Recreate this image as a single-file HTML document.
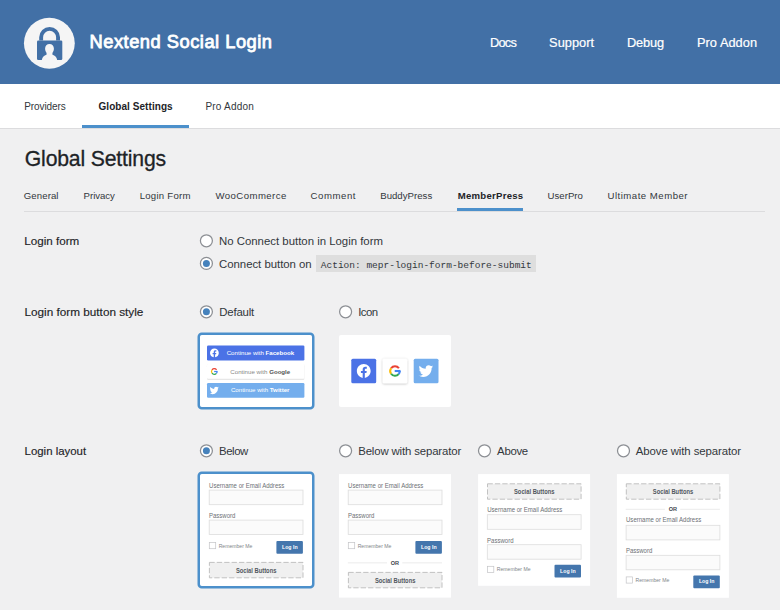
<!DOCTYPE html>
<html><head><meta charset="utf-8"><title>Nextend Social Login - Global Settings</title>
<style>html,body{margin:0;padding:0;width:780px;height:610px;overflow:hidden;background:#f0f0f1;font-family:"Liberation Sans",sans-serif}
svg{display:block}</style></head>
<body><svg width="780" height="610" viewBox="0 0 780 610"><defs><filter id="sh" x="-10%" y="-30%" width="120%" height="160%"><feDropShadow dx="0" dy="0.5" stdDeviation="0.6" flood-color="#000" flood-opacity="0.25"/></filter><filter id="sh2" x="-20%" y="-20%" width="140%" height="140%"><feDropShadow dx="0" dy="0.6" stdDeviation="1.1" flood-color="#000" flood-opacity="0.3"/></filter></defs>
<rect x="0" y="0" width="780" height="610" fill="#f0f0f1" />
<rect x="0" y="0" width="780" height="84" fill="#4270a6" />
<rect x="0" y="84" width="780" height="44" fill="#ffffff" />
<rect x="0" y="128" width="780" height="1" fill="#dcdcde" />
<circle cx="49.35" cy="43.25" r="25.4" fill="#f5f5f5"/>
<path d="M41.15 40.6 V37.3 A8.45 8.45 0 0 1 58.05 37.3 V40.6" fill="none" stroke="#4270a6" stroke-width="3.9"/>
<rect x="37" y="40.4" width="25.3" height="19.6" rx="1.3" fill="#4270a6"/>
<path d="M49.5 44 C52.1 44 53.9 45.9 53.9 48.6 C53.9 50.6 53.2 52 52.4 52.9 L52.5 54.7 C55 55.4 56.6 57 57.2 60 L41.8 60 C42.4 57 44 55.4 46.5 54.7 L46.6 52.9 C45.8 52 45.1 50.6 45.1 48.6 C45.1 45.9 46.9 44 49.5 44 Z" fill="#f5f5f5"/>
<text x="89.50" y="48.00" font-family='"Liberation Sans", sans-serif' font-size="18.300" font-weight="normal" fill="#ffffff" stroke="#ffffff" stroke-width="0.8" textLength="182.50" lengthAdjust="spacing" >Nextend Social Login</text>
<text x="489.90" y="47.00" font-family='"Liberation Sans", sans-serif' font-size="12.800" font-weight="normal" fill="#ffffff" stroke="#ffffff" stroke-width="0.2" textLength="26.90" lengthAdjust="spacing" >Docs</text>
<text x="549.10" y="47.00" font-family='"Liberation Sans", sans-serif' font-size="12.800" font-weight="normal" fill="#ffffff" stroke="#ffffff" stroke-width="0.2" textLength="44.91" lengthAdjust="spacing" >Support</text>
<text x="626.90" y="47.00" font-family='"Liberation Sans", sans-serif' font-size="12.800" font-weight="normal" fill="#ffffff" stroke="#ffffff" stroke-width="0.2" textLength="37.30" lengthAdjust="spacing" >Debug</text>
<text x="697.00" y="47.00" font-family='"Liberation Sans", sans-serif' font-size="12.800" font-weight="normal" fill="#ffffff" stroke="#ffffff" stroke-width="0.2" textLength="60.01" lengthAdjust="spacing" >Pro Addon</text>
<text x="24.30" y="110.00" font-family='"Liberation Sans", sans-serif' font-size="10.000" font-weight="normal" fill="#32373c"  textLength="41.50" lengthAdjust="spacing" >Providers</text>
<text x="98.50" y="110.00" font-family='"Liberation Sans", sans-serif' font-size="10.000" font-weight="bold" fill="#1d2327"  textLength="74.10" lengthAdjust="spacing" >Global Settings</text>
<text x="205.40" y="110.00" font-family='"Liberation Sans", sans-serif' font-size="10.000" font-weight="normal" fill="#32373c"  textLength="48.40" lengthAdjust="spacing" >Pro Addon</text>
<rect x="82" y="125" width="107" height="3" fill="#4c90cb" />
<text x="24.80" y="165.50" font-family='"Liberation Sans", sans-serif' font-size="21.200" font-weight="normal" fill="#1d2327" stroke="#1d2327" stroke-width="0.3" textLength="141.30" lengthAdjust="spacing" >Global Settings</text>
<text x="23.80" y="199.40" font-family='"Liberation Sans", sans-serif' font-size="9.600" font-weight="normal" fill="#32373c"  textLength="34.70" lengthAdjust="spacing" >General</text>
<text x="83.60" y="199.40" font-family='"Liberation Sans", sans-serif' font-size="9.600" font-weight="normal" fill="#32373c"  textLength="31.30" lengthAdjust="spacing" >Privacy</text>
<text x="139.70" y="199.40" font-family='"Liberation Sans", sans-serif' font-size="9.600" font-weight="normal" fill="#32373c"  textLength="50.80" lengthAdjust="spacing" >Login Form</text>
<text x="215.50" y="199.40" font-family='"Liberation Sans", sans-serif' font-size="9.600" font-weight="normal" fill="#32373c"  textLength="70.80" lengthAdjust="spacing" >WooCommerce</text>
<text x="310.60" y="199.40" font-family='"Liberation Sans", sans-serif' font-size="9.600" font-weight="normal" fill="#32373c"  textLength="44.90" lengthAdjust="spacing" >Comment</text>
<text x="380.20" y="199.40" font-family='"Liberation Sans", sans-serif' font-size="9.600" font-weight="normal" fill="#32373c"  textLength="52.00" lengthAdjust="spacing" >BuddyPress</text>
<text x="457.70" y="199.40" font-family='"Liberation Sans", sans-serif' font-size="9.600" font-weight="bold" fill="#1d2327"  textLength="65.50" lengthAdjust="spacing" >MemberPress</text>
<text x="547.50" y="199.40" font-family='"Liberation Sans", sans-serif' font-size="9.600" font-weight="normal" fill="#32373c"  textLength="35.40" lengthAdjust="spacing" >UserPro</text>
<text x="607.50" y="199.40" font-family='"Liberation Sans", sans-serif' font-size="9.600" font-weight="normal" fill="#32373c"  textLength="80.00" lengthAdjust="spacing" >Ultimate Member</text>
<rect x="24" y="211" width="741" height="1" fill="#dcdcde" />
<rect x="457" y="208" width="66" height="3" fill="#4c90cb" />
<text x="24.20" y="245.30" font-family='"Liberation Sans", sans-serif' font-size="11.661" font-weight="normal" fill="#1d2327" stroke="#1d2327" stroke-width="0.15"  >Login form</text>
<circle cx="206.4" cy="240.8" r="6" fill="#ffffff" stroke="#8c8f94" stroke-width="1.25"/>
<text x="219.00" y="244.70" font-family='"Liberation Sans", sans-serif' font-size="11.400" font-weight="normal" fill="#32373c"  textLength="163.99" lengthAdjust="spacing" >No Connect button in Login form</text>
<circle cx="206.4" cy="263.4" r="6" fill="#ffffff" stroke="#8c8f94" stroke-width="1.25"/>
<circle cx="206.4" cy="263.4" r="3.5" fill="#4682bc"/>
<text x="219.00" y="268.30" font-family='"Liberation Sans", sans-serif' font-size="11.400" font-weight="normal" fill="#32373c"  textLength="92.70" lengthAdjust="spacing" >Connect button on</text>
<rect x="316" y="255" width="220" height="17" fill="#dedede" />
<text x="320.80" y="267.60" font-family='"Liberation Mono", monospace' font-size="9.508" font-weight="normal" fill="#32373c"   >Action: mepr-login-form-before-submit</text>
<text x="24.50" y="315.80" font-family='"Liberation Sans", sans-serif' font-size="11.762" font-weight="normal" fill="#1d2327" stroke="#1d2327" stroke-width="0.15"  >Login form button style</text>
<circle cx="206.4" cy="311.8" r="6" fill="#ffffff" stroke="#8c8f94" stroke-width="1.25"/>
<circle cx="206.4" cy="311.8" r="3.5" fill="#4682bc"/>
<text x="219.20" y="315.80" font-family='"Liberation Sans", sans-serif' font-size="11.400" font-weight="normal" fill="#32373c"  textLength="35.01" lengthAdjust="spacing" >Default</text>
<circle cx="345.6" cy="311.8" r="6" fill="#ffffff" stroke="#8c8f94" stroke-width="1.25"/>
<text x="358.20" y="315.80" font-family='"Liberation Sans", sans-serif' font-size="11.400" font-weight="normal" fill="#32373c"  textLength="19.80" lengthAdjust="spacing" >Icon</text>
<text x="24.60" y="455.40" font-family='"Liberation Sans", sans-serif' font-size="11.422" font-weight="normal" fill="#1d2327" stroke="#1d2327" stroke-width="0.15"  >Login layout</text>
<circle cx="206.4" cy="450.8" r="6" fill="#ffffff" stroke="#8c8f94" stroke-width="1.25"/>
<circle cx="206.4" cy="450.8" r="3.5" fill="#4682bc"/>
<text x="219.00" y="455.40" font-family='"Liberation Sans", sans-serif' font-size="11.400" font-weight="normal" fill="#32373c"  textLength="29.27" lengthAdjust="spacing" >Below</text>
<circle cx="345.6" cy="450.8" r="6" fill="#ffffff" stroke="#8c8f94" stroke-width="1.25"/>
<text x="358.20" y="455.40" font-family='"Liberation Sans", sans-serif' font-size="11.400" font-weight="normal" fill="#32373c"  textLength="103.00" lengthAdjust="spacing" >Below with separator</text>
<circle cx="484.5" cy="450.8" r="6" fill="#ffffff" stroke="#8c8f94" stroke-width="1.25"/>
<text x="497.10" y="455.40" font-family='"Liberation Sans", sans-serif' font-size="11.400" font-weight="normal" fill="#32373c"  textLength="31.11" lengthAdjust="spacing" >Above</text>
<circle cx="623.5" cy="450.8" r="6" fill="#ffffff" stroke="#8c8f94" stroke-width="1.25"/>
<text x="635.80" y="455.40" font-family='"Liberation Sans", sans-serif' font-size="11.400" font-weight="normal" fill="#32373c"  textLength="105.30" lengthAdjust="spacing" >Above with separator</text>
<rect x="200" y="335" width="112" height="72" fill="#ffffff" />
<rect x="198.75" y="333.75" width="114.5" height="74.5" rx="3" fill="none" stroke="#4c90cb" stroke-width="2.5"/>
<rect x="207" y="345.6" width="97.4" height="14.8" fill="#4b72e6" rx="1.2"/>
<rect x="207" y="364" width="97.4" height="14.8" rx="1.2" fill="#fff" filter="url(#sh)"/>
<rect x="207" y="383" width="97.4" height="14.8" fill="#74aeed" rx="1.2"/>
<path transform="translate(210.00,348.50) scale(0.3667)" d="M24 12.073C24 5.405 18.627 0 12 0S0 5.405 0 12.073C0 18.1 4.388 23.094 10.125 24v-8.437H7.078v-3.49h3.047V9.43c0-3.025 1.792-4.697 4.533-4.697 1.312 0 2.686.236 2.686.236v2.971H15.83c-1.491 0-1.956.93-1.956 1.886v2.264h3.328l-.532 3.49h-2.796V24C19.612 23.094 24 18.1 24 12.073z" fill="#ffffff"/>
<path d="M216.58 369.90 A2.79 2.79 0 0 0 212.02 369.90" fill="none" stroke="#EA4335" stroke-width="1.22"/>
<path d="M212.02 369.90 A2.79 2.79 0 0 0 212.02 373.10" fill="none" stroke="#FBBC05" stroke-width="1.22"/>
<path d="M212.02 373.10 A2.79 2.79 0 0 0 216.44 373.29" fill="none" stroke="#34A853" stroke-width="1.22"/>
<path d="M216.44 373.29 A2.79 2.79 0 0 0 217.09 371.50" fill="none" stroke="#4285F4" stroke-width="1.22"/>
<rect x="214.13" y="370.89" width="3.40" height="1.22" fill="#4285F4"/>
<path transform="translate(209.80,385.80) scale(0.3833)" d="M23.6 4.6c-.9.4-1.8.6-2.8.8 1-.6 1.8-1.6 2.1-2.7-1 .6-2 1-3.1 1.2C18.9 2.9 17.6 2.3 16.2 2.3c-2.7 0-4.9 2.2-4.9 4.9 0 .4 0 .8.1 1.1C7.3 8.1 3.7 6.1 1.3 3.2.9 3.9.6 4.8.6 5.7c0 1.7.9 3.2 2.2 4.1-.8 0-1.6-.2-2.2-.6v.1c0 2.4 1.7 4.4 3.9 4.8-.4.1-.8.2-1.3.2-.3 0-.6 0-.9-.1.6 2 2.4 3.4 4.6 3.4-1.7 1.3-3.8 2.1-6.1 2.1-.4 0-.8 0-1.2-.1 2.2 1.4 4.8 2.2 7.5 2.2 9.1 0 14-7.5 14-14v-.6c1-.7 1.8-1.6 2.5-2.6z" fill="#fff"/>
<text x="226.70" y="355.30" font-family='"Liberation Sans", sans-serif' font-size="6.142" fill="#ffffff">Continue with <tspan font-weight="bold" fill="#ffffff">Facebook</tspan></text>
<text x="230.30" y="373.70" font-family='"Liberation Sans", sans-serif' font-size="6.134" fill="#888888">Continue with <tspan font-weight="bold" fill="#555555">Google</tspan></text>
<text x="230.90" y="392.30" font-family='"Liberation Sans", sans-serif' font-size="6.152" fill="#ffffff">Continue with <tspan font-weight="bold" fill="#ffffff">Twitter</tspan></text>
<rect x="339" y="335" width="112" height="72" fill="#ffffff" rx="2"/>
<rect x="351.3" y="358.7" width="24.9" height="24.6" fill="#4b72e6" rx="1.5"/>
<path transform="translate(356.85,364.10) scale(0.5750)" d="M24 12.073C24 5.405 18.627 0 12 0S0 5.405 0 12.073C0 18.1 4.388 23.094 10.125 24v-8.437H7.078v-3.49h3.047V9.43c0-3.025 1.792-4.697 4.533-4.697 1.312 0 2.686.236 2.686.236v2.971H15.83c-1.491 0-1.956.93-1.956 1.886v2.264h3.328l-.532 3.49h-2.796V24C19.612 23.094 24 18.1 24 12.073z" fill="#ffffff"/>
<rect x="382.7" y="358.7" width="24.5" height="24.6" rx="1.5" fill="#fff" filter="url(#sh2)"/>
<path d="M398.90 368.27 A4.76 4.76 0 0 0 391.10 368.27" fill="none" stroke="#EA4335" stroke-width="2.09"/>
<path d="M391.10 368.27 A4.76 4.76 0 0 0 391.10 373.73" fill="none" stroke="#FBBC05" stroke-width="2.09"/>
<path d="M391.10 373.73 A4.76 4.76 0 0 0 398.64 374.06" fill="none" stroke="#34A853" stroke-width="2.09"/>
<path d="M398.64 374.06 A4.76 4.76 0 0 0 399.76 371.00" fill="none" stroke="#4285F4" stroke-width="2.09"/>
<rect x="394.71" y="369.96" width="5.80" height="2.09" fill="#4285F4"/>
<rect x="413.7" y="358.7" width="24.8" height="24.6" fill="#74aeed" rx="1.5"/>
<path transform="translate(418.85,363.75) scale(0.6042)" d="M23.6 4.6c-.9.4-1.8.6-2.8.8 1-.6 1.8-1.6 2.1-2.7-1 .6-2 1-3.1 1.2C18.9 2.9 17.6 2.3 16.2 2.3c-2.7 0-4.9 2.2-4.9 4.9 0 .4 0 .8.1 1.1C7.3 8.1 3.7 6.1 1.3 3.2.9 3.9.6 4.8.6 5.7c0 1.7.9 3.2 2.2 4.1-.8 0-1.6-.2-2.2-.6v.1c0 2.4 1.7 4.4 3.9 4.8-.4.1-.8.2-1.3.2-.3 0-.6 0-.9-.1.6 2 2.4 3.4 4.6 3.4-1.7 1.3-3.8 2.1-6.1 2.1-.4 0-.8 0-1.2-.1 2.2 1.4 4.8 2.2 7.5 2.2 9.1 0 14-7.5 14-14v-.6c1-.7 1.8-1.6 2.5-2.6z" fill="#fff"/>
<rect x="200" y="474" width="112" height="112" fill="#ffffff" />
<rect x="198.75" y="472.75" width="114.5" height="114.5" rx="3" fill="none" stroke="#4c90cb" stroke-width="2.5"/>
<text x="209.10" y="488.00" font-family='"Liberation Sans", sans-serif' font-size="6.900" font-weight="normal" fill="#6c7075"  textLength="75.20" lengthAdjust="spacingAndGlyphs" >Username or Email Address</text>
<rect x="209.2" y="490.1" width="93.8" height="14.6" fill="#fbfbfb" stroke="#dddddd" stroke-width="0.8"/>
<text x="209.00" y="518.00" font-family='"Liberation Sans", sans-serif' font-size="6.900" font-weight="normal" fill="#6c7075"  textLength="26.40" lengthAdjust="spacingAndGlyphs" >Password</text>
<rect x="209.2" y="520.1" width="93.8" height="14.5" fill="#fbfbfb" stroke="#dddddd" stroke-width="0.8"/>
<rect x="209.3" y="542.5" width="6.4" height="6.2" fill="#ffffff" stroke="#c3c4c7" stroke-width="0.7"/>
<text x="218.70" y="547.60" font-family='"Liberation Sans", sans-serif' font-size="5.600" font-weight="normal" fill="#80858a"  textLength="33.70" lengthAdjust="spacingAndGlyphs" >Remember Me</text>
<rect x="276.4" y="541" width="26.5" height="12.8" fill="#4476ad" rx="1"/>
<text x="282.00" y="549.00" font-family='"Liberation Sans", sans-serif' font-size="6.200" font-weight="bold" fill="#ffffff"  textLength="15.60" lengthAdjust="spacingAndGlyphs" >Log In</text>
<rect x="209.4" y="562.4" width="93.6" height="15.4" fill="#f0f0f0" stroke="#bbbbbb" stroke-width="0.9" stroke-dasharray="5.3 2.1"/>
<text x="235.90" y="572.50" font-family='"Liberation Sans", sans-serif' font-size="6.300" font-weight="bold" fill="#50575e"  textLength="40.50" lengthAdjust="spacingAndGlyphs" >Social Buttons</text>
<rect x="339" y="474.1" width="112" height="123.5" fill="#ffffff" />
<text x="348.10" y="488.00" font-family='"Liberation Sans", sans-serif' font-size="6.900" font-weight="normal" fill="#6c7075"  textLength="75.20" lengthAdjust="spacingAndGlyphs" >Username or Email Address</text>
<rect x="348.2" y="490.1" width="93.8" height="14.6" fill="#fbfbfb" stroke="#dddddd" stroke-width="0.8"/>
<text x="348.00" y="518.00" font-family='"Liberation Sans", sans-serif' font-size="6.900" font-weight="normal" fill="#6c7075"  textLength="26.40" lengthAdjust="spacingAndGlyphs" >Password</text>
<rect x="348.2" y="520.1" width="93.8" height="14.5" fill="#fbfbfb" stroke="#dddddd" stroke-width="0.8"/>
<rect x="348.3" y="542.5" width="6.4" height="6.2" fill="#ffffff" stroke="#c3c4c7" stroke-width="0.7"/>
<text x="357.70" y="547.60" font-family='"Liberation Sans", sans-serif' font-size="5.600" font-weight="normal" fill="#80858a"  textLength="33.70" lengthAdjust="spacingAndGlyphs" >Remember Me</text>
<rect x="415.4" y="541" width="26.5" height="12.8" fill="#4476ad" rx="1"/>
<text x="421.00" y="549.00" font-family='"Liberation Sans", sans-serif' font-size="6.200" font-weight="bold" fill="#ffffff"  textLength="15.60" lengthAdjust="spacingAndGlyphs" >Log In</text>
<rect x="347.8" y="562.55" width="39.2" height="0.7" fill="#e2e2e2" />
<rect x="402.3" y="562.55" width="39.7" height="0.7" fill="#e2e2e2" />
<text x="390.80" y="565.00" font-family='"Liberation Sans", sans-serif' font-size="5.533" font-weight="bold" fill="#3c434a"   >OR</text>
<rect x="348.4" y="572.4" width="93.6" height="15.4" fill="#f0f0f0" stroke="#bbbbbb" stroke-width="0.9" stroke-dasharray="5.3 2.1"/>
<text x="374.90" y="582.50" font-family='"Liberation Sans", sans-serif' font-size="6.300" font-weight="bold" fill="#50575e"  textLength="40.50" lengthAdjust="spacingAndGlyphs" >Social Buttons</text>
<rect x="478.1" y="474.1" width="112" height="111.7" fill="#ffffff" />
<rect x="487.5" y="483.79999999999995" width="93.6" height="15.4" fill="#f0f0f0" stroke="#bbbbbb" stroke-width="0.9" stroke-dasharray="5.3 2.1"/>
<text x="514.00" y="493.90" font-family='"Liberation Sans", sans-serif' font-size="6.300" font-weight="bold" fill="#50575e"  textLength="40.50" lengthAdjust="spacingAndGlyphs" >Social Buttons</text>
<text x="487.20" y="511.80" font-family='"Liberation Sans", sans-serif' font-size="6.900" font-weight="normal" fill="#6c7075"  textLength="75.20" lengthAdjust="spacingAndGlyphs" >Username or Email Address</text>
<rect x="487.3" y="514.6999999999999" width="93.8" height="14.6" fill="#fbfbfb" stroke="#dddddd" stroke-width="0.8"/>
<text x="487.10" y="542.60" font-family='"Liberation Sans", sans-serif' font-size="6.900" font-weight="normal" fill="#6c7075"  textLength="26.40" lengthAdjust="spacingAndGlyphs" >Password</text>
<rect x="487.3" y="544.6999999999999" width="93.8" height="14.5" fill="#fbfbfb" stroke="#dddddd" stroke-width="0.8"/>
<rect x="487.40000000000003" y="566.3" width="6.4" height="6.2" fill="#ffffff" stroke="#c3c4c7" stroke-width="0.7"/>
<text x="496.80" y="571.40" font-family='"Liberation Sans", sans-serif' font-size="5.600" font-weight="normal" fill="#80858a"  textLength="33.70" lengthAdjust="spacingAndGlyphs" >Remember Me</text>
<rect x="554.5" y="564.8" width="26.5" height="12.8" fill="#4476ad" rx="1"/>
<text x="560.10" y="572.80" font-family='"Liberation Sans", sans-serif' font-size="6.200" font-weight="bold" fill="#ffffff"  textLength="15.60" lengthAdjust="spacingAndGlyphs" >Log In</text>
<rect x="616.9" y="474.1" width="112" height="123.7" fill="#ffffff" />
<rect x="626.3" y="483.79999999999995" width="93.6" height="15.4" fill="#f0f0f0" stroke="#bbbbbb" stroke-width="0.9" stroke-dasharray="5.3 2.1"/>
<text x="652.80" y="493.90" font-family='"Liberation Sans", sans-serif' font-size="6.300" font-weight="bold" fill="#50575e"  textLength="40.50" lengthAdjust="spacingAndGlyphs" >Social Buttons</text>
<rect x="625.6999999999999" y="508.84999999999997" width="39.2" height="0.7" fill="#e2e2e2" />
<rect x="680.1999999999999" y="508.84999999999997" width="39.7" height="0.7" fill="#e2e2e2" />
<text x="668.70" y="511.30" font-family='"Liberation Sans", sans-serif' font-size="5.533" font-weight="bold" fill="#3c434a"   >OR</text>
<text x="626.00" y="522.40" font-family='"Liberation Sans", sans-serif' font-size="6.900" font-weight="normal" fill="#6c7075"  textLength="75.20" lengthAdjust="spacingAndGlyphs" >Username or Email Address</text>
<rect x="626.1" y="525.3" width="93.8" height="14.6" fill="#fbfbfb" stroke="#dddddd" stroke-width="0.8"/>
<text x="625.90" y="553.20" font-family='"Liberation Sans", sans-serif' font-size="6.900" font-weight="normal" fill="#6c7075"  textLength="26.40" lengthAdjust="spacingAndGlyphs" >Password</text>
<rect x="626.1" y="555.3" width="93.8" height="14.5" fill="#fbfbfb" stroke="#dddddd" stroke-width="0.8"/>
<rect x="626.1999999999999" y="576.9" width="6.4" height="6.2" fill="#ffffff" stroke="#c3c4c7" stroke-width="0.7"/>
<text x="635.60" y="582.00" font-family='"Liberation Sans", sans-serif' font-size="5.600" font-weight="normal" fill="#80858a"  textLength="33.70" lengthAdjust="spacingAndGlyphs" >Remember Me</text>
<rect x="693.3" y="575.4" width="26.5" height="12.8" fill="#4476ad" rx="1"/>
<text x="698.90" y="583.40" font-family='"Liberation Sans", sans-serif' font-size="6.200" font-weight="bold" fill="#ffffff"  textLength="15.60" lengthAdjust="spacingAndGlyphs" >Log In</text>
</svg></body></html>
